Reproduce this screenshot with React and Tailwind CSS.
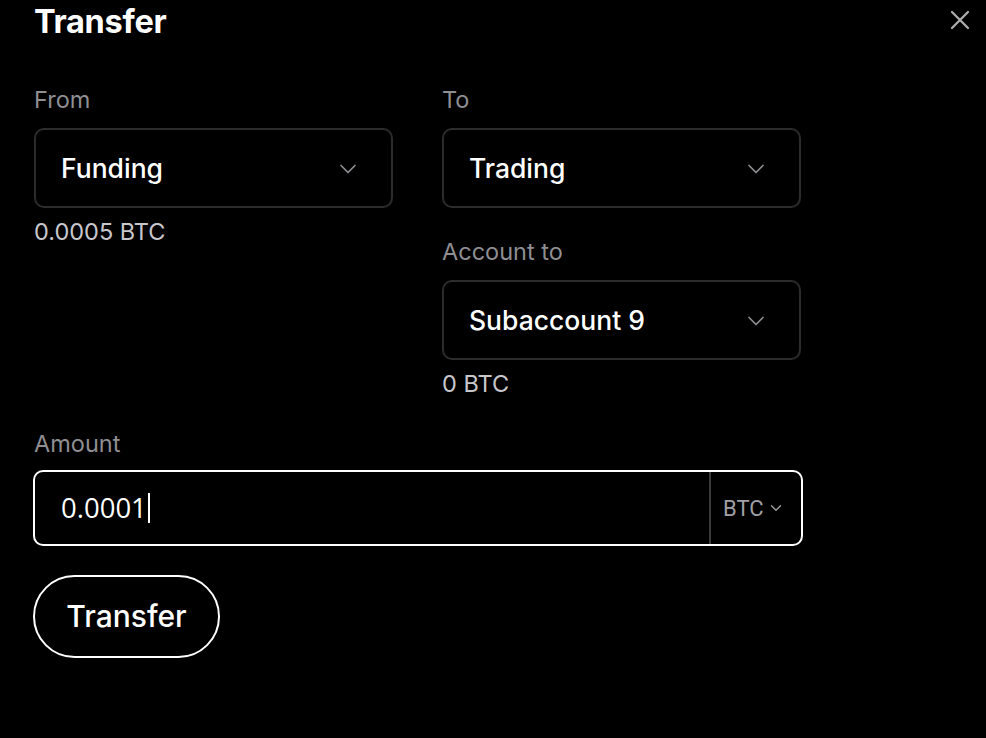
import { ChevronDown } from "lucide-react";

function Label({ children, className = "" }) {
  return (
    <div className={`h-[26px] text-[23.5px] leading-[26px] text-[#8e8e93] ${className}`}>
      {children}
    </div>
  );
}

function Select({ value }) {
  return (
    <div className="flex h-[80px] items-center justify-between rounded-[10px] border-2 border-[#2c2c2e] bg-black pl-[25px] pr-[29px] pt-[1px]">
      <span className="text-[26.5px] font-medium text-white">{value}</span>
      <ChevronDown size={28} strokeWidth={1.5} className="text-[#8e8e93]" />
    </div>
  );
}

export default function App() {
  return (
    <div
      className="min-h-screen bg-black pl-[34px] pr-[16px] text-white"
      style={{ fontFamily: "Inter, 'Noto Sans', sans-serif" }}
    >
      <div className="flex h-[44px] items-center justify-between">
        <h1 className="text-[32.5px] font-bold tracking-[-0.3px]">Transfer</h1>
        <svg width="20" height="20" viewBox="0 0 20 20" className="mt-[-4px]">
          <path d="M2 2L18 18M18 2L2 18" stroke="#b0b0b0" strokeWidth="2.2" strokeLinecap="round" />
        </svg>
      </div>

      <div className="mt-[43px] flex w-[768px] gap-[49px]">
        <div className="w-[359px]">
          <Label>From</Label>
          <div className="mt-[15px]">
            <Select value="Funding" />
          </div>
          <div className="mt-[12px] h-[24px] text-[23.5px] leading-[24px] text-[#c7c7cc]">0.0005 BTC</div>
        </div>
        <div className="w-[359px]">
          <Label>To</Label>
          <div className="mt-[15px]">
            <Select value="Trading" />
          </div>
          <Label className="mt-[31px]">Account to</Label>
          <div className="mt-[15px]">
            <Select value="Subaccount 9" />
          </div>
          <div className="mt-[12px] h-[24px] text-[23.5px] leading-[24px] text-[#c7c7cc]">0 BTC</div>
        </div>
      </div>

      <Label className="mt-[35px]">Amount</Label>
      <div className="mt-[13px] flex h-[76px] w-[770px] ml-[-1px] items-stretch rounded-[10px] border-2 border-white">
        <div className="flex flex-1 items-center pl-[26px]">
          <span
            className="text-[27.5px] text-white"
            style={{ fontFamily: "'Open Sans', sans-serif" }}
          >
            0.0001
          </span>
          <span className="ml-[1px] h-[30px] w-[2px] bg-white" />
        </div>
        <div className="flex w-[92px] items-center gap-[3px] border-l-2 border-[#3a3a3c] pl-[12px]">
          <span className="text-[22px] text-[#a0a0a5]" style={{ fontFamily: "Roboto, sans-serif" }}>
            BTC
          </span>
          <ChevronDown size={18} strokeWidth={1.8} className="text-[#a0a0a5]" />
        </div>
      </div>

      <button
        type="button"
        className="mt-[29px] ml-[-1px] flex h-[83px] w-[187px] items-center justify-center rounded-full border-2 border-white text-[30px] font-medium text-white"
      >
        Transfer
      </button>
    </div>
  );
}
